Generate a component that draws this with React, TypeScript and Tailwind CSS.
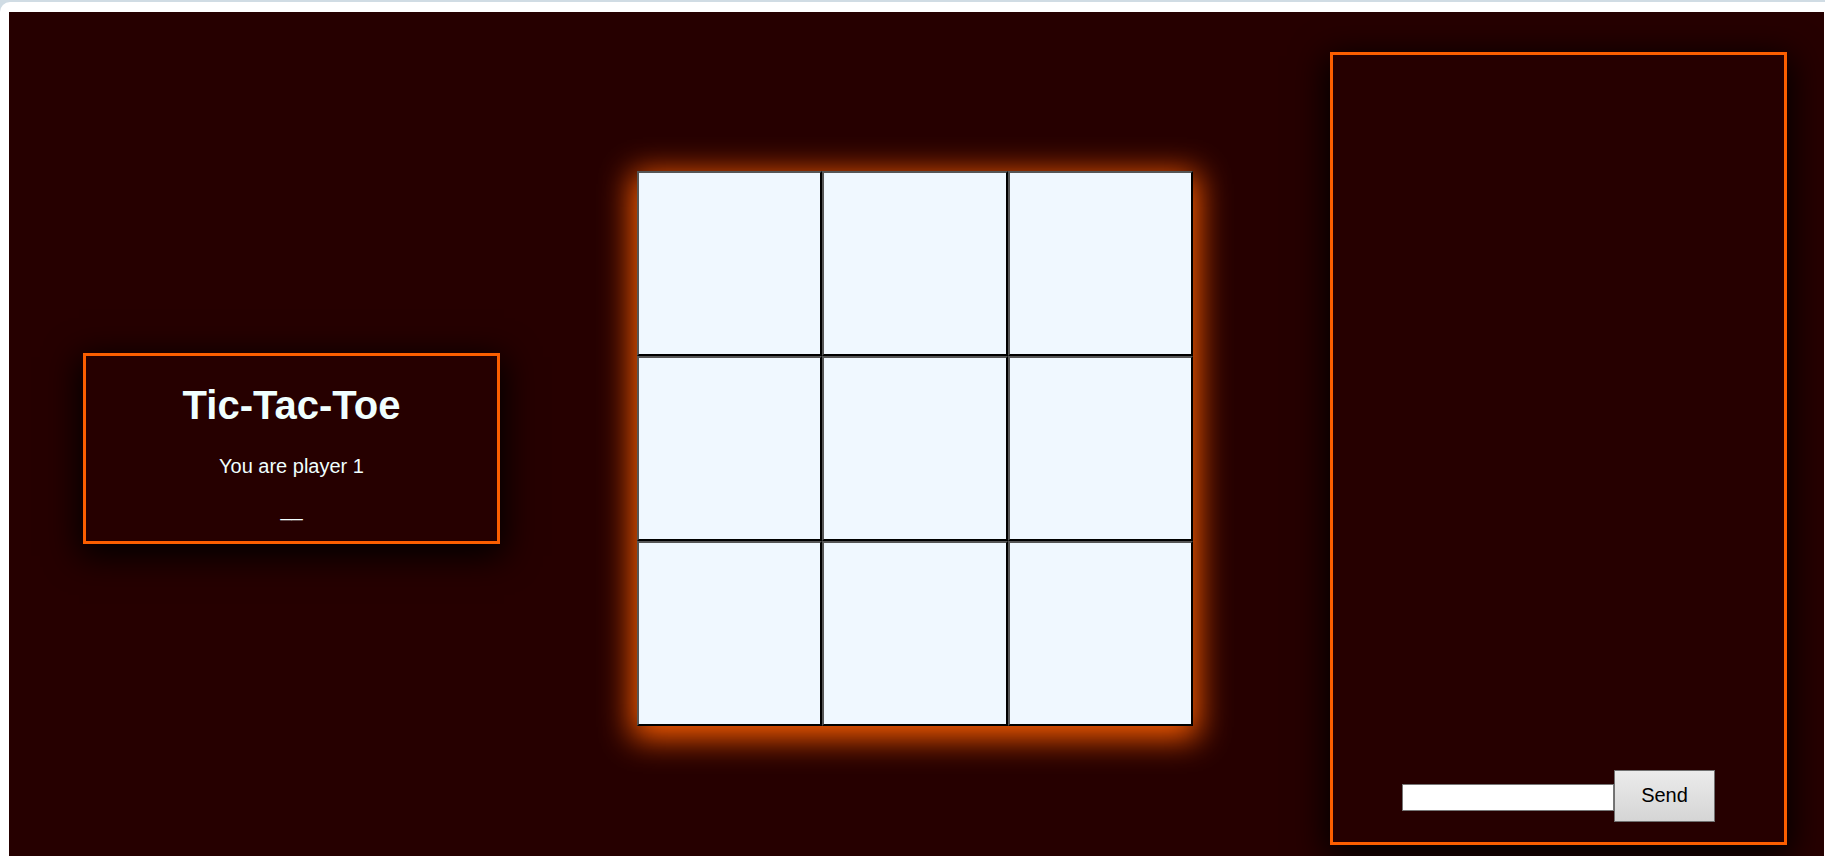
const cells = Array.from({ length: 9 }, (_, i) => i + 1);

const panel =
  "border-[3px] border-[#fc5e00] shadow-[0_8px_32px_4px_#000000]";

function PlayerPanel() {
  return (
    <section
      className={`${panel} flex flex-col items-center pt-[26px] pb-5 text-center text-[20px] leading-[23px] text-[#f0ffff]`}
    >
      <h1 className="mb-[27px] text-[40px] leading-[46px] font-bold">
        Tic-Tac-Toe
      </h1>
      <p className="mb-5">You are player 1</p>
      <p>__</p>
    </section>
  );
}

function Board() {
  return (
    <section
      aria-label="Board"
      className="grid grid-cols-3 shadow-[0_7px_30px_5px_#fc5e00]"
    >
      {cells.map((n) => (
        <button
          key={n}
          type="button"
          aria-label={`Cell ${n}`}
          className="aspect-square border-2 border-t-[#555555] border-r-black border-b-black border-l-[#555555] bg-[#f0f8ff]"
        />
      ))}
    </section>
  );
}

function Chat() {
  return (
    <section
      aria-label="Chat"
      className={`${panel} flex flex-col justify-end self-stretch pb-5`}
    >
      <form
        className="flex items-end justify-center text-[20px] leading-[23px]"
        onSubmit={(e) => e.preventDefault()}
      >
        <input
          type="text"
          aria-label="Message"
          className="mb-[11px] w-[212px] min-w-0 border border-[#767676] bg-white px-[2px] py-px text-black outline-none"
        />
        <button
          type="submit"
          className="border border-[#707070] bg-linear-to-b from-[#ebebeb] to-[#d5d5d5] px-[26px] pt-[13px] pb-[14px] text-black"
        >
          Send
        </button>
      </form>
    </section>
  );
}

export default function App() {
  return (
    <div className="flex min-h-screen flex-col bg-[#d0dce4] pt-[2px] font-['Liberation_Sans',Arial,sans-serif]">
      <div className="flex flex-1 flex-col rounded-tl-[10px] bg-white pt-[10px] pr-px pl-[9px]">
        <main className="grid flex-1 grid-cols-[417fr_556fr_457fr] items-center gap-[137px] overflow-hidden bg-[#260000] pt-10 pr-[37px] pb-[11px] pl-[74px]">
          <PlayerPanel />
          <Board />
          <Chat />
        </main>
      </div>
    </div>
  );
}
